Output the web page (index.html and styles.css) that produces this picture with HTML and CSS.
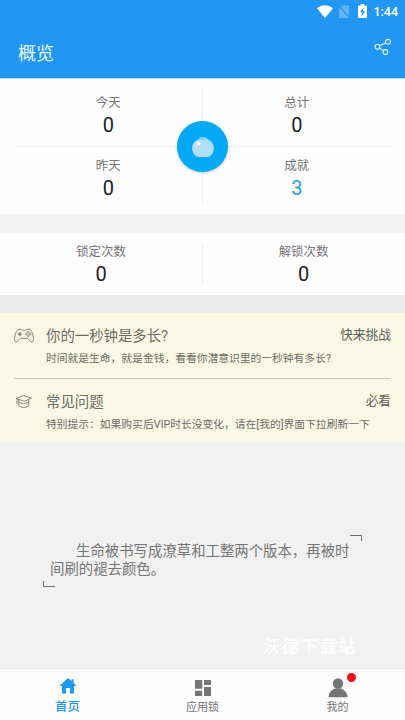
FILE: index.html
```html
<!DOCTYPE html>
<html lang="zh-CN">
<head>
<meta charset="utf-8">
<title>概览</title>
<link rel="stylesheet" href="styles.css">
</head>
<body>
<div class="app">
  <header class="header">
    <div class="status">
      <svg class="wifi" width="16" height="13" viewBox="0 0 16 13"><path d="M0 3.2C4.5-.7 11.5-.7 16 3.2L8 13z" fill="#fff"/></svg>
      <svg class="sim" width="10" height="13" viewBox="0 0 10 13"><path d="M3.5.5H10V13H0V4z" fill="#64b5f6"/><path d="M0 1l10 11" stroke="#2196f3" stroke-width="1.3"/></svg>
      <svg class="battery" width="9" height="14" viewBox="0 0 9 14"><path d="M2.7 0h3.6v1.5H8q1 0 1 1V13q0 1-1 1H1q-1 0-1-1V2.500q0-1 1-1h1.700z" fill="#fff"/><path d="M5.500 3.500L2 8.300h2.100L3.500 12 7 7.200H4.900z" fill="#2196f3"/></svg>
      <span class="clock">1:44</span>
    </div>
    <div class="title-row">
      <h1>概览</h1>
      <svg class="share" width="18" height="17" viewBox="0 0 18 17" fill="none" stroke="#e4f4ff" stroke-width="1.100"><circle cx="3.500" cy="8.700" r="2.400"/><circle cx="14" cy="3.800" r="2.400"/><circle cx="11.500" cy="14" r="2.400"/><path d="M5.800 7.600l5.900-2.700M5.500 10.200l4 2.400"/></svg>
    </div>
  </header>

  <section class="overview">
    <div class="stat"><span>今天</span><b>0</b></div>
    <div class="stat"><span>总计</span><b>0</b></div>
    <div class="stat"><span>昨天</span><b>0</b></div>
    <div class="stat"><span>成就</span><b class="accent">3</b></div>
    <i class="rule-h"></i><i class="rule-v"></i>
    <div class="orb">
      <svg width="22" height="22" viewBox="0 0 22 22"><path d="M6.500 3.200C8 .6 14 .6 15.500 3.200C19.500 4.800 21.800 8 21.800 12C21.800 17.500 18.500 21 15.500 21H6.500C3.500 21 .2 17.500 .2 12C.2 8 2.500 4.800 6.500 3.200z" fill="#b2def3"/><path d="M6.500 3.600Q11-.2 15.500 3.600Q11 5 6.500 3.600z" fill="#7fd0f6"/><circle cx="6.500" cy="7.600" r="1.900" fill="#fff"/><circle cx="3.700" cy="10.200" r=".8" fill="#e8f8ff"/></svg>
    </div>
  </section>

  <section class="counts">
    <div class="stat"><span>锁定次数</span><b>0</b></div>
    <div class="stat"><span>解锁次数</span><b>0</b></div>
    <i class="count-rule"></i>
  </section>

  <section class="notices">
    <div class="notice">
      <svg class="notice-icon" width="20" height="16" viewBox="0 0 20 16" fill="none" stroke="#77776f" stroke-width=".9"><path d="M5 1.200C7 .7 7.200 2.200 8.500 2.200h3C12.800 2.200 13 .7 15 1.200C18 1.600 19.500 8 19.400 12C19.200 14.500 17 14.500 15.800 12.800C14.500 11 14 10.300 12.500 10.300h-5C6 10.300 5.500 11 4.200 12.800C3 14.500 .8 14.500 .6 12C.5 8 2 1.600 5 1.200z"/><path d="M5.800 4v4.200M3.700 6.100h4.200" stroke-width="1.300"/><g stroke-width=".75"><circle cx="14.300" cy="4.200" r=".9"/><circle cx="14.300" cy="8" r=".9"/><circle cx="12.300" cy="6.100" r=".9"/><circle cx="16.300" cy="6.100" r=".9"/></g></svg>
      <div class="notice-body">
        <div class="notice-head"><h2>你的一秒钟是多长?</h2><em>快来挑战</em></div>
        <p class="wide">时间就是生命，就是金钱，看看你潜意识里的一秒钟有多长?</p>
      </div>
    </div>
    <div class="notice">
      <svg class="notice-icon" width="20" height="16" viewBox="0 0 20 16" fill="none" stroke="#77776f" stroke-width=".9"><path d="M2.200 4.300L9.500 1.400l8 2.600-7.300 3.400zM4.800 5.600v6.200q5 3.400 9.900 0V5.600M4.800 8.400q5 2.700 9.900 0M3 4.700v5.700"/></svg>
      <div class="notice-body">
        <div class="notice-head"><h2>常见问题</h2><em>必看</em></div>
        <p>特别提示：如果购买后VIP时长没变化，请在[我的]界面下拉刷新一下</p>
      </div>
    </div>
  </section>

  <main class="quote-area">
    <blockquote>生命被书写成潦草和工整两个版本，再被时间刷的褪去颜色。</blockquote>
    <div class="watermark">沃德下载站</div>
  </main>

  <nav class="tabs">
    <a class="tab active">
      <svg width="18" height="16" viewBox="0 0 18 16"><path d="M9 0l3.500 3V1.200h2v3.600L17.500 8H15v7.500h-4V10H7v5.500H3V8H.5z" fill="#2196f3"/></svg>
      <span>首页</span>
    </a>
    <a class="tab">
      <svg width="18" height="18" viewBox="0 0 18 18" fill="#757575"><path d="M1 0h7.200v8.700H1zM10 0h7v5h-7zM1 10.800h7.200V16H1zM10 7h7v9h-7z"/></svg>
      <span>应用锁</span>
    </a>
    <a class="tab">
      <svg width="20" height="20" viewBox="0 0 20 20" fill="#757575"><circle cx="10" cy="5.500" r="5.200"/><path d="M.5 19.300C.5 14 4 12 7 10.500h6c3 1.500 6.500 3.500 6.500 8.800z"/></svg>
      <span>我的</span>
      <i class="dot"></i>
    </a>
  </nav>
</div>
</body>
</html>
```
FILE: styles.css
```css
*, *::before, *::after { box-sizing: border-box; }
body {
  margin: 0;
  background: #f1f1f1;
  color: #757575;
  font-family: Roboto, "Noto Sans CJK SC", sans-serif;
}
h1, h2, p, blockquote { margin: 0; font-weight: 400; }
.app { width: 405px; height: 720px; display: flex; flex-direction: column; overflow: hidden; }
svg { display: block; flex: none; }

.header { height: 79px; flex: none; background: #2196f3; color: #fff; border-bottom: 1px solid #aee0fb; }
.status { height: 22px; padding: 0 7px 0 0; display: flex; align-items: center; justify-content: flex-end; }
.wifi { margin-right: 6px; }
.sim { margin-right: 9px; }
.battery { margin-right: 6px; }
.clock { font-size: 12.5px; font-weight: 500; line-height: 23px; }
.title-row { display: flex; justify-content: space-between; padding: 16px 13px 0 18px; }
h1 { font-size: 18px; line-height: 32px; color: #e9f8ff; }

.stat { display: flex; flex-direction: column; align-items: center; }
.stat span { font-size: 12.4px; line-height: 18px; }
.stat b { font-size: 20px; line-height: 24px; margin-top: 1px; font-weight: 400; color: #212121; }
.stat .accent { color: #1ba0e2; }

.overview {
  position: relative;
  height: 135px;
  flex: none;
  display: grid;
  grid-template-columns: 1fr 1fr;
  grid-template-rows: 62.5px 62.5px;
  padding: 15px 14px 0;
  background: #fdfdfd;
}
.rule-h { position: absolute; left: 14px; right: 14px; top: 67px; height: 1px; background: #eeeff0; }
.rule-v { position: absolute; left: 202px; top: 9px; height: 115px; width: 1px; background: #eeeff0; }
.orb {
  position: absolute;
  left: 177px;
  top: 42px;
  width: 51px;
  height: 51px;
  border-radius: 50%;
  background: #03a9f4;
  box-shadow: 0 1px 3px rgba(0, 60, 100, .25);
  display: flex;
  align-items: center;
  justify-content: center;
}

.counts {
  position: relative;
  margin-top: 19px;
  height: 62px;
  flex: none;
  display: grid;
  grid-template-columns: 202px 203px;
  padding: 10px 0 0;
  background: #fdfdfd;
}
.counts .stat b { margin-top: 1px; }
.count-rule { position: absolute; left: 202px; top: 11px; height: 40px; width: 1px; background: #eeeff0; }

.notices { border-top: 18px solid #ebebeb; height: 147px; flex: none; background: #f9f8e5; padding: 0 14px; }
.notice { height: 65px; display: flex; padding-top: 13px; }
.notice + .notice { border-top: 1px solid #cccbbd; }
.notice-icon { margin: 2px 12px 0 0; }
.notice-body { flex: 1; }
.notice-head { display: flex; justify-content: space-between; }
h2 { font-size: 14.400px; line-height: 22px; color: #6c6c65; }
em { font-style: normal; font-size: 12.700px; line-height: 18px; color: #5f5f59; }
.notice p { font-size: 10.780px; line-height: 18px; margin-top: 2px; white-space: nowrap; color: #6c6c65; }

.quote-area { position: relative; height: 226px; flex: none; padding: 101px 55px 0 50px; }
blockquote { font-size: 14.400px; line-height: 17.500px; text-indent: 26px; }
.quote-area::before, .quote-area::after { content: ""; position: absolute; width: 12px; height: 6px; }
.quote-area::before { left: 350px; top: 93px; border-top: 1px solid #707070; border-right: 1px solid #707070; }
.quote-area::after { left: 43px; top: 139px; border-bottom: 1px solid #707070; border-left: 1px solid #707070; }
.watermark {
  position: absolute;
  left: 263px;
  top: 192px;
  font-size: 17.500px;
  line-height: 26px;
  letter-spacing: 1.400px;
  transform: skewX(-5deg);
  font-weight: 500;
  color: #fff;
  white-space: nowrap;
}

.tabs { height: 52px; flex: none; display: grid; grid-template-columns: repeat(3, 1fr); background: #fdfdfd; border-top: 1px solid #e6e6e6; }
.tab { position: relative; display: flex; flex-direction: column; align-items: center; justify-content: flex-end; padding-bottom: 4px; }
.tab span { font-size: 11px; line-height: 16px; margin-top: 2px; }
.tab.active span { font-size: 12.400px; font-weight: 500; color: #2196f3; margin-top: 5px; }
.tab.active { padding-bottom: 5px; }
.dot { position: absolute; left: 77px; top: 4px; width: 9px; height: 9px; border-radius: 50%; background: #ee1111; }
```
